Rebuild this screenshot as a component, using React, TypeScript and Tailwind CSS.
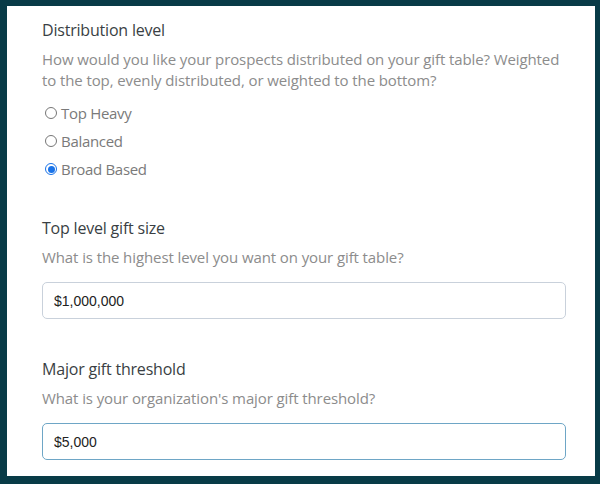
import { useState } from 'react'

const font = { fontFamily: '"Open Sans", "Noto Sans", sans-serif' }

function Radio({ label, checked, onSelect }: { label: string; checked: boolean; onSelect: () => void }) {
  return (
    <label className="flex items-center h-[28px] cursor-pointer" onClick={onSelect}>
      {checked ? (
        <span className="w-[12px] h-[12px] rounded-full border border-[#1a73e8] flex items-center justify-center">
          <span className="w-[7px] h-[7px] rounded-full bg-[#1a73e8]"></span>
        </span>
      ) : (
        <span className="w-[12px] h-[12px] rounded-full border border-[#767676] bg-white"></span>
      )}
      <span className="ml-[4px] text-[15px] text-[#7a7a7a] tracking-[-0.3px]">{label}</span>
    </label>
  )
}

export default function App() {
  const [level, setLevel] = useState('broad')

  return (
    <div className="w-[600px] h-[484px] bg-[#083b47] pt-[6px] pl-[7px] pr-[5px] pb-[8px]">
      <div className="bg-white h-full pl-[35px] pr-[30px] pt-[12px]" style={font}>
        <h3 className="text-[16px] text-[#3a3f44] leading-[24px] tracking-[-0.2px]">Distribution level</h3>
        <p className="mt-[7px] text-[15px] leading-[21px] text-[#8c8c8c] tracking-[-0.1px]">
          How would you like your prospects distributed on your gift table? Weighted to the top, evenly distributed, or weighted to the bottom?
        </p>
        <div className="mt-[8px] pl-[3px]">
          <Radio label="Top Heavy" checked={level === 'top'} onSelect={() => setLevel('top')} />
          <Radio label="Balanced" checked={level === 'balanced'} onSelect={() => setLevel('balanced')} />
          <Radio label="Broad Based" checked={level === 'broad'} onSelect={() => setLevel('broad')} />
        </div>

        <h3 className="mt-[33px] text-[16px] text-[#3a3f44] leading-[24px] tracking-[-0.2px]">Top level gift size</h3>
        <p className="mt-[7px] text-[15px] leading-[21px] text-[#8c8c8c] tracking-[-0.1px]">
          What is the highest level you want on your gift table?
        </p>
        <input
          className="mt-[14px] w-[524px] h-[37px] rounded-[5px] border border-[#c9d1db] px-[11px] text-[14px] text-[#222] outline-none"
          style={{ fontFamily: '"Liberation Sans", Arial, sans-serif' }}
          defaultValue="$1,000,000"
        />

        <h3 className="mt-[38px] text-[16px] text-[#3a3f44] leading-[24px] tracking-[-0.2px]">Major gift threshold</h3>
        <p className="mt-[7px] text-[15px] leading-[21px] text-[#8c8c8c] tracking-[-0.1px]">
          What is your organization's major gift threshold?
        </p>
        <input
          className="mt-[14px] w-[524px] h-[37px] rounded-[5px] border border-[#6ea6c6] px-[11px] text-[14px] text-[#222] outline-none"
          style={{ fontFamily: '"Liberation Sans", Arial, sans-serif' }}
          defaultValue="$5,000"
        />
      </div>
    </div>
  )
}
